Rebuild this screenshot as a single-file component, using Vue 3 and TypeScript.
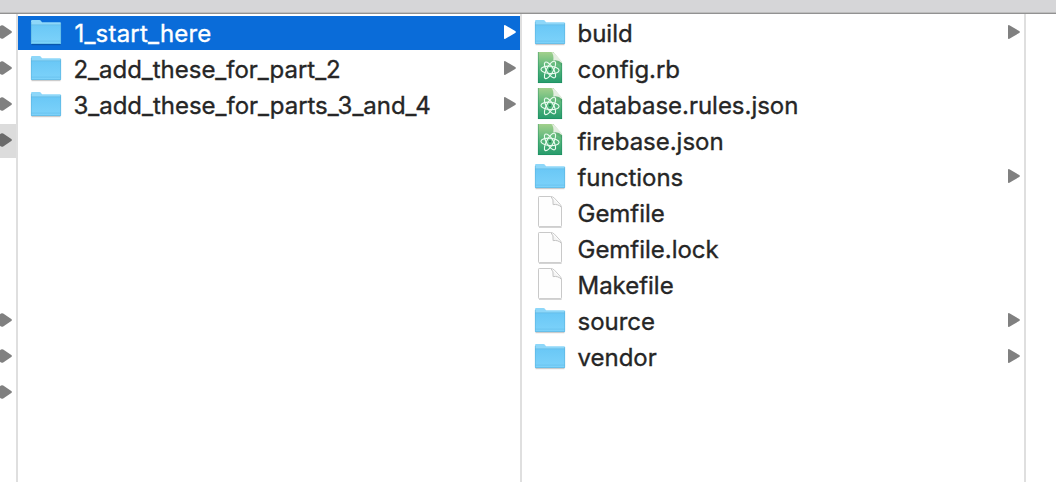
<script setup lang="ts">
type Kind = 'folder' | 'atom' | 'blank'
interface Entry {
  name: string
  kind: Kind
  selected?: boolean
}

const parentRows: ('arrow' | 'active' | 'none')[] = [
  'arrow', 'arrow', 'arrow', 'active', 'none', 'none', 'none', 'none', 'arrow', 'arrow', 'arrow',
]

const columns: Entry[][] = [
  [
    { name: '1_start_here', kind: 'folder', selected: true },
    { name: '2_add_these_for_part_2', kind: 'folder' },
    { name: '3_add_these_for_parts_3_and_4', kind: 'folder' },
  ],
  [
    { name: 'build', kind: 'folder' },
    { name: 'config.rb', kind: 'atom' },
    { name: 'database.rules.json', kind: 'atom' },
    { name: 'firebase.json', kind: 'atom' },
    { name: 'functions', kind: 'folder' },
    { name: 'Gemfile', kind: 'blank' },
    { name: 'Gemfile.lock', kind: 'blank' },
    { name: 'Makefile', kind: 'blank' },
    { name: 'source', kind: 'folder' },
    { name: 'vendor', kind: 'folder' },
  ],
]
</script>

<template>
  <div class="finder">
    <svg class="defs" width="0" height="0" aria-hidden="true">
      <defs>
        <linearGradient id="folderFill" x1="0" y1="0" x2="0" y2="1">
          <stop offset="0" stop-color="#6ac8f6" />
          <stop offset="1" stop-color="#7dd2fa" />
        </linearGradient>
        <linearGradient id="atomFill" x1="0" y1="0" x2="0" y2="1">
          <stop offset="0" stop-color="#a2d08c" />
          <stop offset="0.5" stop-color="#58b67b" />
          <stop offset="1" stop-color="#259b6c" />
        </linearGradient>
      </defs>
    </svg>
    <header class="toolbar"></header>
    <main class="columns">
      <section class="column parent">
        <div v-for="(row, i) in parentRows" :key="i" class="row" :class="{ active: row === 'active' }">
          <svg v-if="row !== 'none'" class="arrow" width="12" height="16" viewBox="0 0 12 16">
            <path d="M0 2.2 Q1.6 .7 3.2 1.6 L11.3 7 Q12.5 8 11.3 9 L3.2 14.4 Q1.6 15.3 0 13.8Z" />
          </svg>
        </div>
      </section>
      <section v-for="(entries, c) in columns" :key="c" class="column list">
        <div v-for="entry in entries" :key="entry.name" class="row" :class="{ selected: entry.selected }">
          <svg class="icon" width="34" height="34" viewBox="0 0 34 34">
            <g v-if="entry.kind === 'folder'">
              <path d="M2.5 28.6H31.5" stroke="#000" stroke-opacity=".2" stroke-width="1.2" />
              <path d="M2 27.2V5.2Q2 4.1 3.1 4.1H10.4Q11.5 4.1 12.1 5L12.6 5.7Q13 6.3 14 6.3H31Q32 6.3 32 7.3V27.2Q32 28 31.2 28H2.8Q2 28 2 27.2Z" fill="#8ed7f9" />
              <path d="M2 9H32V27.2Q32 28 31.2 28H2.8Q2 28 2 27.2Z" fill="url(#folderFill)" />
              <path d="M2 8.8H32" stroke="#62b9e2" stroke-width=".7" />
              <path d="M2.4 25.1H31.6" stroke="#62bce8" stroke-width=".6" />
              <path d="M2.3 6V27.5H31.7V7" fill="none" stroke="#50a9d5" stroke-opacity=".65" stroke-width=".7" />
            </g>
            <g v-else-if="entry.kind === 'atom'">
              <path d="M5 0H20.4L29 10.6V31H5Z" fill="url(#atomFill)" />
              <path d="M5.3 0V31M28.7 11V31M5 30.6H29" fill="none" stroke="#16875a" stroke-opacity=".55" stroke-width=".8" />
              <path d="M18.4 0Q21 2.6 20.3 8.3Q25.6 7.4 29 11.2Q28.6 9.2 27.2 7.6L21.8 1.6Q20.4 0 18.4 0Z" fill="#e4ede0" />
              <path d="M20.3 8.5Q25.6 7.6 29 11.4V14Z" fill="#257e51" fill-opacity=".2" />
              <g fill="none" stroke="#e9fbef" stroke-width="1.15">
                <ellipse cx="17" cy="17.9" rx="9.1" ry="3.7" transform="rotate(4 17 17.9)" />
                <ellipse cx="17" cy="17.9" rx="9.1" ry="3.4" transform="rotate(58 17 17.9)" />
                <ellipse cx="17" cy="17.9" rx="9.8" ry="3.4" transform="rotate(119 17 17.9)" />
              </g>
              <circle cx="17" cy="17.4" r="1.1" fill="#217a50" />
            </g>
            <g v-else>
              <path d="M6 31.4H28.6" stroke="#000" stroke-opacity=".18" />
              <path d="M6.3 .5H17.6Q19.8 .5 21.4 2.1L27.1 8.3Q28.5 9.9 28.5 12V29.8Q28.5 30.6 27.7 30.6H6.3Q5.5 30.6 5.5 29.8V1.3Q5.5 .5 6.3 .5Z" fill="#fefefe" stroke="#c3c3c3" stroke-width=".9" />
              <path d="M18 .7Q20.8 3 20.1 8.6Q25.2 7.8 28.3 11.2" fill="#f4f4f4" stroke="#c3c3c3" stroke-width="1" stroke-linejoin="round" />
            </g>
          </svg>
          <span class="name">{{ entry.name }}</span>
          <svg v-if="entry.kind === 'folder'" class="arrow" width="12" height="16" viewBox="0 0 12 16">
            <path d="M0 2Q0 .7 1.4 1.3L11.2 7Q12.6 8 11.2 9L1.4 14.7Q0 15.3 0 14Z" />
          </svg>
        </div>
      </section>
      <section class="column"></section>
    </main>
  </div>
</template>

<style>
body {
  margin: 0;
  background: #fff;
}
</style>

<style scoped>
.finder {
  width: 100vw;
  height: 100vh;
  overflow: hidden;
  display: flex;
  flex-direction: column;
  background: #fff;
  color: #262626;
  font-family: Inter, "Liberation Sans", sans-serif;
  font-size: 24px;
}
.defs {
  display: block;
  flex: none;
}
.toolbar {
  box-sizing: border-box;
  flex: none;
  height: 14px;
  background: #d6d6d8;
  border-bottom: 1px solid #929292;
  box-shadow: inset 0 -1px #bdbdbd;
}
.columns {
  flex: 1;
  min-height: 0;
  display: grid;
  grid-template-columns: 18px 504px 504px 1fr;
}
.column {
  box-sizing: border-box;
  padding-top: 2px;
  display: flex;
  flex-direction: column;
  gap: 2px;
  min-width: 0;
}
.parent,
.list {
  border-right: 2px solid #dfdfdf;
}
.row {
  box-sizing: border-box;
  flex: none;
  height: 34px;
  display: flex;
  align-items: center;
}
.list .row {
  padding: 0 4px 0 11px;
}
.active {
  background: #dcdcdc;
}
.selected {
  background: #0a6cd9;
  color: #fff;
}
.icon {
  flex: none;
}
.name {
  flex: 1;
  padding: 2px 0 0 10.5px;
  line-height: 34px;
  letter-spacing: -0.02px;
  white-space: nowrap;
  -webkit-text-stroke: 0.35px currentColor;
}
.selected .name {
  padding-left: 11.5px;
  letter-spacing: 0.2px;
}
.arrow {
  flex: none;
  fill: #808080;
  margin-bottom: 2px;
}
.active .arrow {
  fill: #6b6b6b;
}
.selected .arrow {
  fill: #fff;
}
</style>
